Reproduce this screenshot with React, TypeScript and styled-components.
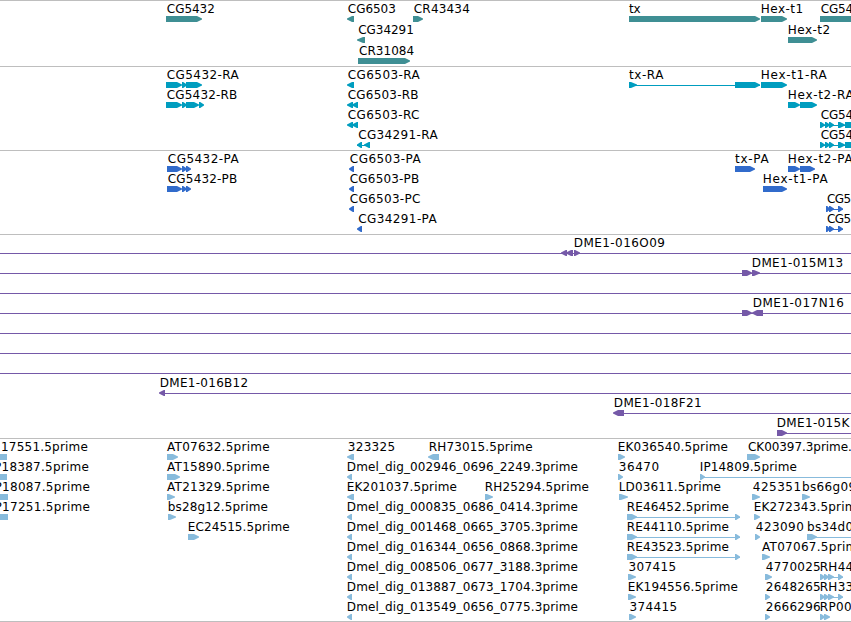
import React from "react";
import styled, { createGlobalStyle } from "styled-components";

type Dir = "r" | "l" | "n";
type Part = [start: number, end: number, dir: Dir];

interface Feature {
    label?: string;
    // left and right edge of the label
    text?: [number, number];
    parts?: Part[];
    line?: [number, number];
}

interface TrackData {
    name: string;
    color: string;
    pitch: number;
    pad: number;
    rows: Feature[][];
}

const VIEW_WIDTH = 851;
const FONT = '12px "DejaVu Sans"';

const f = (label: string, from: number, to: number, parts: Part[], line?: [number, number]): Feature => ({
    label,
    text: [from, to],
    parts,
    line,
});

const tracks: TrackData[] = [
    {
        name: "gene",
        color: "#3f8f94",
        pitch: 21,
        pad: 2,
        rows: [
            [
                f("CG5432", 166.3, 213.7, [[166, 202, "r"]]),
                f("CG6503", 347.3, 394.7, [[347, 354, "l"]]),
                f("CR43434", 413.3, 468.7, [[413, 423, "r"]]),
                f("tx", 628.5, 640, [[629, 760, "r"]]),
                f("Hex-t1", 761.3, 802, [[761, 787, "r"]]),
                f("CG54", 820.3, 852, [[820, 870, "r"]]),
            ],
            [
                f("CG34291", 357.7, 412.7, [[357, 365, "l"]]),
                f("Hex-t2", 788.3, 829, [[788, 817, "r"]]),
            ],
            [f("CR31084", 358.5, 413, [[358, 410, "r"]])],
        ],
    },
    {
        name: "transcript",
        color: "#009dbf",
        pitch: 20,
        pad: 3,
        rows: [
            [
                f("CG5432-RA", 166.3, 239, [[166, 182, "r"], [182, 187, "r"], [186, 202, "r"]]),
                f("CG6503-RA", 347.3, 420, [[347, 354, "l"]]),
                f("tx-RA", 628.5, 663.7, [[629, 637, "r"], [735, 760, "r"]], [629, 760]),
                f("Hex-t1-RA", 761.3, 827, [[761, 787, "r"]]),
            ],
            [
                f("CG5432-RB", 166.3, 236.5, [[166, 182, "r"], [182, 187, "r"], [186, 199, "r"], [199, 204, "r"]]),
                f("CG6503-RB", 347.3, 417.7, [[347, 353, "l"], [352, 358, "l"]]),
                f("Hex-t2-RA", 788.3, 854, [[788, 800, "r"], [800, 817, "r"]]),
            ],
            [
                f("CG6503-RC", 347.3, 418.5, [[347, 353, "l"], [352, 358, "l"]]),
                f("CG54", 820.3, 852, [[820, 825, "r"], [825, 830, "r"], [829, 834, "r"], [838, 845, "r"], [845, 865, "n"]], [820, 851]),
            ],
            [
                f("CG34291-RA", 357.7, 438, [[357, 362, "l"], [364, 370, "l"]], [357, 370]),
                f("CG54", 820.3, 852, [[820, 825, "r"], [825, 830, "r"], [829, 834, "r"], [838, 845, "r"], [845, 865, "n"]], [820, 851]),
            ],
        ],
    },
    {
        name: "protein",
        color: "#316bcb",
        pitch: 20,
        pad: 3,
        rows: [
            [
                f("CG5432-PA", 167.3, 239, [[167, 182, "r"], [182, 187, "r"], [186, 191, "r"]]),
                f("CG6503-PA", 349.3, 421, [[349, 354, "l"]]),
                f("tx-PA", 734.5, 769, [[735, 755, "r"]]),
                f("Hex-t2-PA", 788.3, 853, [[788, 800, "r"], [800, 815, "r"]]),
            ],
            [
                f("CG5432-PB", 167.3, 236.5, [[167, 182, "r"], [182, 187, "r"], [186, 191, "r"]]),
                f("CG6503-PB", 349.3, 418.5, [[349, 354, "l"]]),
                f("Hex-t1-PA", 763.3, 828, [[763, 787, "r"]]),
            ],
            [
                f("CG6503-PC", 349.3, 419.5, [[349, 354, "l"]]),
                f("CG5", 826.5, 850, [[826, 830, "r"], [829, 834, "r"], [838, 843, "r"]], [826, 843]),
            ],
            [
                f("CG34291-PA", 357.7, 437, [[357, 362, "l"]]),
                f("CG5", 826.5, 850, [[826, 830, "r"], [829, 834, "r"], [838, 843, "r"]], [826, 843]),
            ],
        ],
    },
    {
        name: "clone",
        color: "#7559a8",
        pitch: 20,
        pad: 3,
        rows: [
            [f("DME1-016O09", 574.3, 663.7, [[561, 567, "l"], [566, 573, "l"], [574, 580, "r"]], [0, 851])],
            [f("DME1-015M13", 752.3, 842, [[742, 752, "r"], [752, 760, "r"]], [0, 851])],
            [{ line: [0, 851] }],
            [f("DME1-017N16", 753.3, 842.7, [[742, 752, "r"], [752, 763, "l"]], [0, 851])],
            [{ line: [0, 851] }],
            [{ line: [0, 851] }],
            [{ line: [0, 851] }],
            [f("DME1-016B12", 160.3, 247, [[159, 165, "l"]], [160, 851])],
            [f("DME1-018F21", 614.3, 700.5, [[613, 624, "l"]], [614, 851])],
            [f("DME1-015K", 777.3, 850, [[777, 787, "r"]], [777, 851])],
        ],
    },
    {
        name: "est",
        color: "#88bbdc",
        pitch: 20,
        pad: 2,
        rows: [
            [
                f("17551.5prime", 1.5, 87, [[-8, 7, "n"]]),
                f("AT07632.5prime", 166.5, 268.7, [[167, 178, "r"]]),
                f("323325", 347.3, 394, [[347, 354, "l"]]),
                f("RH73015.5prime", 429.3, 531.7, [[428, 439, "l"]]),
                f("EK036540.5prime", 618.3, 727, [[618, 625, "r"]]),
                f("CK00397.3prime.", 747.5, 850.5, [[747, 760, "r"]]),
            ],
            [
                f("P18387.5prime", -5.5, 88, [[-8, 7, "n"]]),
                f("AT15890.5prime", 166.5, 268.7, [[167, 180, "r"]]),
                f("Dmel_dig_002946_0696_2249.3prime", 347.3, 577, [[347, 352, "l"]]),
                f("36470", 618.3, 658, [[618, 623, "r"]]),
                f("IP14809.5prime", 700.3, 796, [[700, 705, "r"]], [700, 851]),
            ],
            [
                f("P18087.5prime", -5, 89, [[-8, 8, "n"]]),
                f("AT21329.5prime", 166.5, 268.7, [[167, 175, "r"]]),
                f("EK201037.5prime", 347.3, 456, [[347, 354, "l"]]),
                f("RH25294.5prime", 485.3, 588, [[485, 493, "r"]]),
                f("LD03611.5prime", 619.3, 720, [[619, 628, "r"]]),
                f("425351", 752.3, 800, [[752, 760, "r"]]),
                f("bs66g09", 802.5, 855, [[802, 810, "r"]]),
            ],
            [
                f("P17251.5prime", -5, 89, [[-8, 8, "n"]]),
                f("bs28g12.5prime", 168.3, 267, [[168, 176, "r"]]),
                f("Dmel_dig_000835_0686_0414.3prime", 347.3, 577, [[347, 352, "l"]]),
                f("RE46452.5prime", 627.3, 728, [[627, 637, "r"], [735, 740, "r"]], [627, 740]),
                f("EK272343.5prime", 754.3, 863, [[754, 760, "r"]]),
            ],
            [
                f("EC24515.5prime", 188.3, 288.7, [[188, 199, "r"]]),
                f("Dmel_dig_001468_0665_3705.3prime", 347.3, 577, [[347, 352, "l"]]),
                f("RE44110.5prime", 627.3, 728, [[627, 637, "r"], [735, 740, "r"]], [627, 740]),
                f("423090", 755.3, 802.7, [[755, 760, "r"]]),
                f("bs34d0", 807.5, 852, [[807, 817, "r"]], [807, 851]),
            ],
            [
                f("Dmel_dig_016344_0656_0868.3prime", 347.3, 577, [[347, 352, "l"]]),
                f("RE43523.5prime", 627.3, 728, [[627, 637, "r"], [735, 740, "r"]], [627, 740]),
                f("AT07067.5prime", 761.5, 864, [[762, 770, "r"]]),
            ],
            [
                f("Dmel_dig_008506_0677_3188.3prime", 347.3, 577, [[347, 352, "l"]]),
                f("307415", 628, 675, [[628, 636, "r"]]),
                f("4770025", 765.3, 819.5, [[765, 772, "r"]]),
                f("RH44", 820.3, 852, [[820, 825, "r"], [824, 829, "r"], [828, 834, "r"], [838, 843, "r"]], [820, 843]),
            ],
            [
                f("Dmel_dig_013887_0673_1704.3prime", 347.3, 577, [[347, 352, "l"]]),
                f("EK194556.5prime", 628.3, 737, [[628, 636, "r"]]),
                f("2648265", 765.3, 819.5, [[765, 770, "r"]]),
                f("RH33", 820.3, 852, [[820, 825, "r"], [824, 829, "r"], [828, 834, "r"], [838, 843, "r"]], [820, 843]),
            ],
            [
                f("Dmel_dig_013549_0656_0775.3prime", 347.3, 577, [[347, 352, "l"]]),
                f("374415", 629, 676, [[629, 636, "r"]]),
                f("2666296", 765.3, 819.5, [[765, 770, "r"]]),
                f("RP00", 820.3, 850.5, [[820, 825, "r"], [824, 830, "r"]]),
            ],
        ],
    },
];

const ruler = document.createElement("canvas").getContext("2d")!;

// spreads a label evenly over the width it takes on the map
function tracking(label: string, width: number) {
    ruler.font = FONT;
    const m = ruler.measureText(label);
    const ink = m.actualBoundingBoxRight + m.actualBoundingBoxLeft;
    return { spacing: (width - ink) / (label.length - 1), bearing: m.actualBoundingBoxLeft };
}

// block with a stepped head pointing in the direction of the strand
function partPath([a, b, dir]: Part) {
    if (dir === "n") return `M${a} 0H${b}V6H${a}Z`;
    const w = b - a;
    const s = dir === "r" ? 1 : -1;
    const tail = dir === "r" ? a : b;
    const tip = dir === "r" ? b : a;
    if (w > 9) {
        const neck = tip - s * 5;
        return `M${tail} 0H${neck}L${neck + s * 2} 1L${tip} 2.5V3.5L${neck + s * 2} 5L${neck} 6H${tail}Z`;
    }
    const back = tail + s * (w > 6 ? 2 : 1.2);
    return `M${tail} 0H${back}L${tip} 2.5V3.5L${back} 6H${tail}Z`;
}

function TrackRow({ features, color, pitch }: { features: Feature[]; color: string; pitch: number }) {
    return (
        <Row $pitch={pitch}>
            <Glyphs width={VIEW_WIDTH} height={6} fill={color}>
                {features.map((item, i) => (
                    <g key={i}>
                        {item.line && <rect x={item.line[0]} y={3} width={item.line[1] - item.line[0]} height={1} />}
                        {item.parts?.map((part, j) => <path key={j} d={partPath(part)} />)}
                    </g>
                ))}
            </Glyphs>
            {features.map((item, i) => {
                if (!item.label || !item.text) return null;
                const [from, to] = item.text;
                const { spacing, bearing } = tracking(item.label, to - from);
                return (
                    <Label key={i} style={{ left: from + bearing + 0.5, letterSpacing: spacing }}>
                        {item.label}
                    </Label>
                );
            })}
        </Row>
    );
}

function App() {
    return (
        <Browser>
            <GlobalStyle />
            {tracks.map((track) => (
                <Track key={track.name} $pad={track.pad}>
                    {track.rows.map((row, i) => (
                        <TrackRow key={i} features={row} color={track.color} pitch={track.pitch} />
                    ))}
                </Track>
            ))}
        </Browser>
    );
}

const GlobalStyle = createGlobalStyle`
    body {
        margin: 0;
        background: white;
        overflow: hidden;
    }
`;

const Browser = styled.main`
    width: ${VIEW_WIDTH}px;
    height: 622px;
    box-sizing: border-box;
    overflow: hidden;
    border-bottom: 1px solid #bebebe;
    background: white;
    color: black;
    font: ${FONT}, sans-serif;
`;

const Track = styled.section<{ $pad: number }>`
    display: flex;
    flex-direction: column;
    border-top: 1px solid #bebebe;
    padding-bottom: ${(props) => props.$pad}px;
`;

const Row = styled.div<{ $pitch: number }>`
    position: relative;
    box-sizing: border-box;
    height: ${(props) => props.$pitch}px;
    padding-top: 15px;
`;

const Glyphs = styled.svg`
    display: block;
`;

/* features sit at their own coordinate on the genome */
const Label = styled.span`
    position: absolute;
    top: 1px;
    line-height: 15px;
    white-space: pre;
`;

export default App;
